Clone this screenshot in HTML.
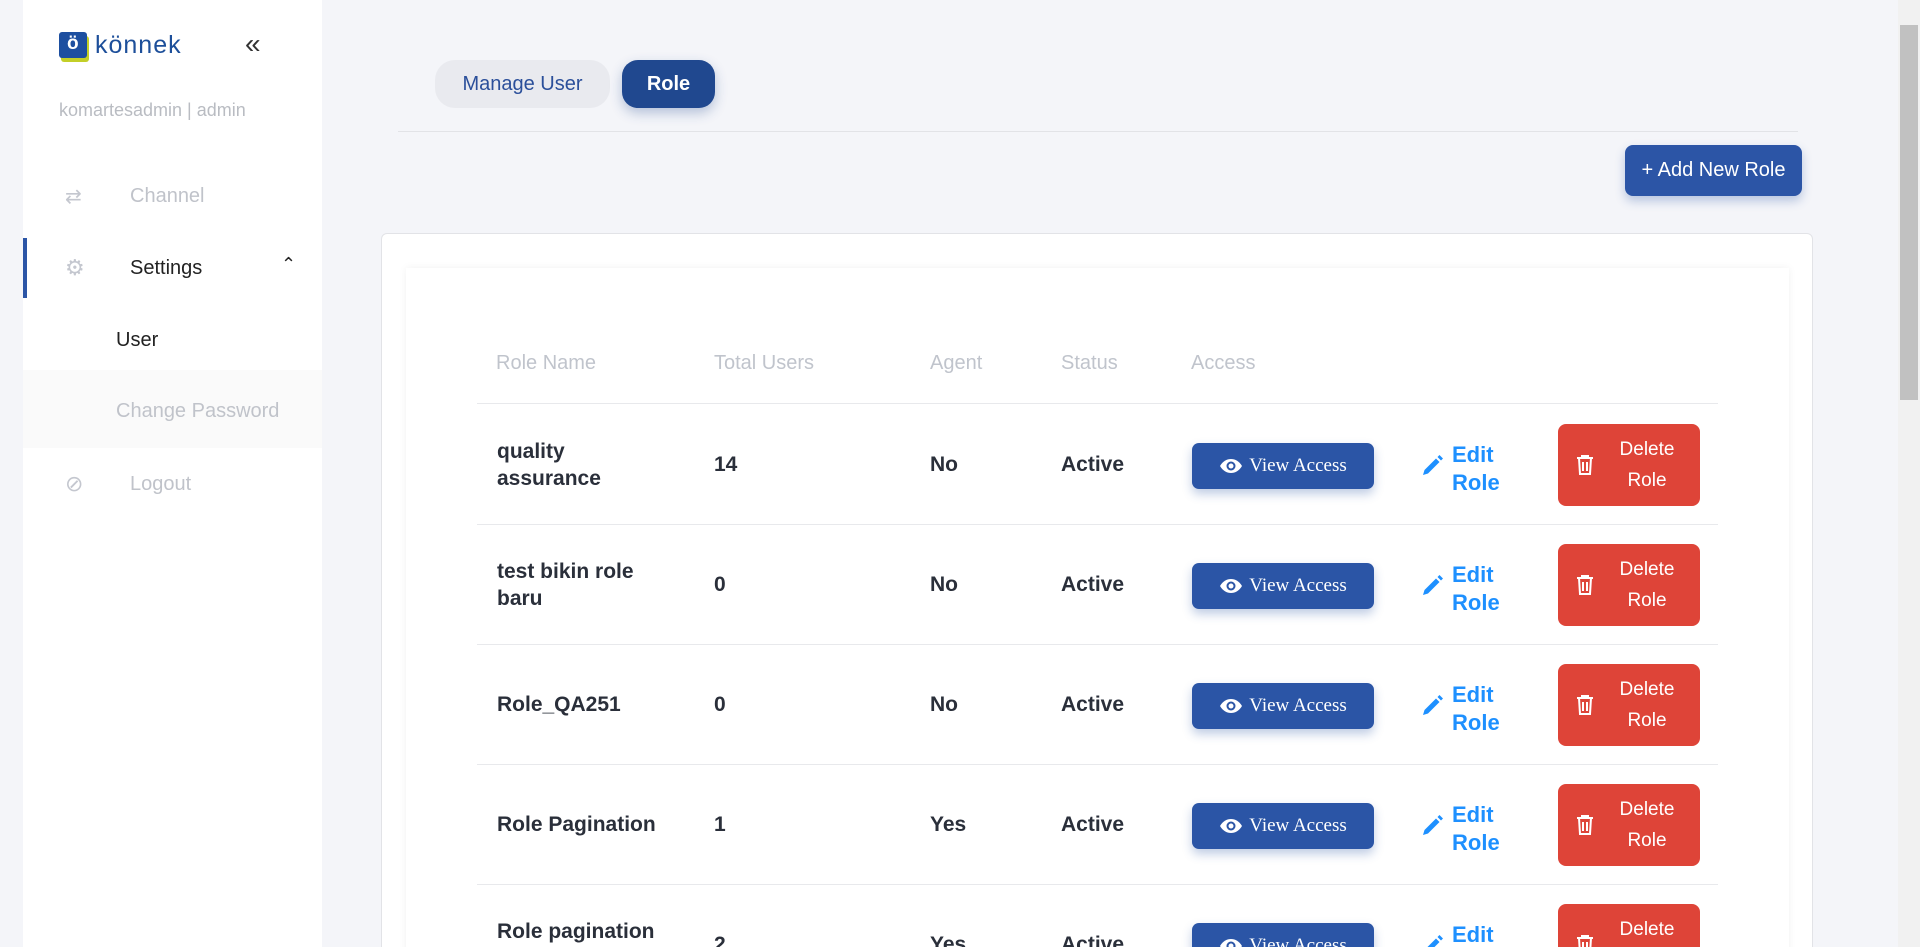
<!DOCTYPE html>
<html><head><meta charset="utf-8"><style>
*{box-sizing:border-box;margin:0;padding:0}
html,body{width:1920px;height:947px;overflow:hidden}
body{background:#f4f5f9;font-family:"Liberation Sans","DejaVu Sans",sans-serif;position:relative}
#wrap{position:absolute;left:0;top:0;width:1920px;height:947px;overflow:hidden}
.abs{position:absolute}
.side{left:23px;top:0;width:299px;height:947px;background:#fff}
.nav{position:absolute;left:0;width:299px;height:72px;display:flex;align-items:center;font-size:20px}
.nav .ic{position:absolute;left:42px;color:#c4c7cf}
.nav .tx{position:absolute;left:107px}
.row{position:absolute;left:477px;width:1241px;height:120px;border-bottom:1px solid #e8e9ec}
.name{position:absolute;left:20px;font-size:21px;font-weight:bold;color:#2a2f3a;line-height:27px;width:150px}
.cell{position:absolute;font-size:21px;font-weight:bold;color:#2a2f3a}
.va{position:absolute;left:715px;top:38px;width:182px;height:46px;background:#2b55a6;border-radius:7px;color:#fff;font-family:"Liberation Serif",serif;font-size:19px;display:flex;align-items:center;justify-content:center;gap:6px;box-shadow:0 5px 10px rgba(43,85,166,.3)}
.ed{position:absolute;left:975px;top:36px;color:#1e90ff;font-size:22px;font-weight:bold;line-height:28px}
.del{position:absolute;left:1081px;top:19px;width:142px;height:82px;background:#de4438;border-radius:8px;color:#fff;font-size:19px;line-height:31px;text-align:center;padding-left:36px;padding-top:10px}
.del svg{position:absolute;left:18px;top:30px}
</style></head><body><div id="wrap">
<div class="abs side">
  <div class="abs" style="left:36px;top:32px;width:28px;height:26px;background:#1d4fa0;border-radius:3px;box-shadow:2px 4px 0 #c3cf27"></div>
  <div class="abs" style="left:44px;top:33px;color:#fff;font-size:19px;font-weight:bold">ö</div>
  <div class="abs" style="left:72px;top:31px;color:#1d4f9a;font-size:25px;letter-spacing:1px">könnek</div>
  <div class="abs" style="left:222px;top:28px;font-size:28px;color:#333">«</div>
  <div class="abs" style="left:36px;top:100px;color:#b9bcc2;font-size:18px">komartesadmin | admin</div>
  <div class="nav" style="top:160px;color:#c0c3ca"><span class="ic">⇄</span><span class="tx">Channel</span></div>
  <div class="nav" style="top:232px;color:#222"><div class="abs" style="left:0;top:6px;width:4px;height:60px;background:#2b55a6"></div><span class="ic" style="font-size:22px">⚙</span><span class="tx">Settings</span><span class="abs" style="left:258px;top:22px;font-size:18px">⌃</span></div>
  <div class="nav" style="top:304px;color:#222;left:0"><span class="tx" style="left:93px">User</span></div>
  <div class="abs" style="left:0;top:370px;width:299px;height:78px;background:#fafafa"></div>
  <div class="nav" style="top:375px;color:#c0c3ca"><span class="tx" style="left:93px">Change Password</span></div>
  <div class="nav" style="top:448px;color:#c0c3ca"><span class="ic" style="font-size:22px">⊘</span><span class="tx">Logout</span></div>
</div>
<div class="abs" style="left:435px;top:60px;width:175px;height:48px;background:#e9eaef;border-radius:20px;color:#2b4f9a;font-size:20px;display:flex;align-items:center;justify-content:center">Manage User</div>
<div class="abs" style="left:622px;top:60px;width:93px;height:48px;background:#20488f;border-radius:16px;color:#fff;font-size:20px;font-weight:bold;display:flex;align-items:center;justify-content:center;box-shadow:0 5px 12px rgba(32,72,143,.3)">Role</div>
<div class="abs" style="left:398px;top:131px;width:1400px;height:1px;background:#e2e3e7"></div>
<div class="abs" style="left:1625px;top:145px;width:177px;height:51px;background:#2c55a6;border-radius:8px;color:#fff;font-size:20px;display:flex;align-items:center;justify-content:center;box-shadow:0 5px 10px rgba(43,85,166,.3)">+ Add New Role</div>
<div class="abs" style="left:381px;top:233px;width:1432px;height:760px;background:#fff;border:1px solid #e2e3e7;border-radius:6px"></div>
<div class="abs" style="left:406px;top:268px;width:1383px;height:720px;background:#fff;box-shadow:0 0 8px rgba(0,0,0,.06)"></div>
<div class="abs" style="left:477px;top:352px;width:1241px;height:52px;border-bottom:1px solid #e8e9ec;color:#c0c4cc;font-size:20px">
 <span class="abs" style="left:19px">Role Name</span><span class="abs" style="left:237px">Total Users</span><span class="abs" style="left:453px">Agent</span><span class="abs" style="left:584px">Status</span><span class="abs" style="left:714px">Access</span>
</div>
<div class="row" style="top:405px"><div class="name" style="top:33px">quality assurance</div><div class="cell" style="left:237px;top:48px">14</div><div class="cell" style="left:453px;top:48px">No</div><div class="cell" style="left:584px;top:48px">Active</div>
<div class="va"><svg width="24" height="16" viewBox="0 0 24 16"><path d="M1 8C4 3 8 1 12 1s8 2 11 7c-3 5-7 7-11 7S4 13 1 8z" fill="#fff"/><circle cx="12" cy="8" r="4.5" fill="#2b55a6"/><circle cx="12" cy="8" r="2.5" fill="#fff"/></svg>View Access</div>
<div class="ed"><svg class="abs" style="left:-32px;top:13px" width="24" height="24" viewBox="0 0 24 24"><path d="M3 21l1.5-5L16 4.5l3.5 3.5L8 19.5z M17.5 3l2-2 3.5 3.5-2 2z" fill="#1e90ff"/></svg>Edit<br>Role</div>
<div class="del"><svg width="18" height="22" viewBox="0 0 18 22"><path d="M1 4h16M6 4V2h6v2M3 4l1 16h10l1-16M7 8v9M11 8v9" stroke="#fff" stroke-width="2" fill="none"/></svg>Delete<br>Role</div></div>
<div class="row" style="top:525px"><div class="name" style="top:33px">test bikin role baru</div><div class="cell" style="left:237px;top:48px">0</div><div class="cell" style="left:453px;top:48px">No</div><div class="cell" style="left:584px;top:48px">Active</div>
<div class="va"><svg width="24" height="16" viewBox="0 0 24 16"><path d="M1 8C4 3 8 1 12 1s8 2 11 7c-3 5-7 7-11 7S4 13 1 8z" fill="#fff"/><circle cx="12" cy="8" r="4.5" fill="#2b55a6"/><circle cx="12" cy="8" r="2.5" fill="#fff"/></svg>View Access</div>
<div class="ed"><svg class="abs" style="left:-32px;top:13px" width="24" height="24" viewBox="0 0 24 24"><path d="M3 21l1.5-5L16 4.5l3.5 3.5L8 19.5z M17.5 3l2-2 3.5 3.5-2 2z" fill="#1e90ff"/></svg>Edit<br>Role</div>
<div class="del"><svg width="18" height="22" viewBox="0 0 18 22"><path d="M1 4h16M6 4V2h6v2M3 4l1 16h10l1-16M7 8v9M11 8v9" stroke="#fff" stroke-width="2" fill="none"/></svg>Delete<br>Role</div></div>
<div class="row" style="top:645px"><div class="name" style="top:46px;width:200px">Role_QA251</div><div class="cell" style="left:237px;top:48px">0</div><div class="cell" style="left:453px;top:48px">No</div><div class="cell" style="left:584px;top:48px">Active</div>
<div class="va"><svg width="24" height="16" viewBox="0 0 24 16"><path d="M1 8C4 3 8 1 12 1s8 2 11 7c-3 5-7 7-11 7S4 13 1 8z" fill="#fff"/><circle cx="12" cy="8" r="4.5" fill="#2b55a6"/><circle cx="12" cy="8" r="2.5" fill="#fff"/></svg>View Access</div>
<div class="ed"><svg class="abs" style="left:-32px;top:13px" width="24" height="24" viewBox="0 0 24 24"><path d="M3 21l1.5-5L16 4.5l3.5 3.5L8 19.5z M17.5 3l2-2 3.5 3.5-2 2z" fill="#1e90ff"/></svg>Edit<br>Role</div>
<div class="del"><svg width="18" height="22" viewBox="0 0 18 22"><path d="M1 4h16M6 4V2h6v2M3 4l1 16h10l1-16M7 8v9M11 8v9" stroke="#fff" stroke-width="2" fill="none"/></svg>Delete<br>Role</div></div>
<div class="row" style="top:765px"><div class="name" style="top:46px;width:200px">Role Pagination</div><div class="cell" style="left:237px;top:48px">1</div><div class="cell" style="left:453px;top:48px">Yes</div><div class="cell" style="left:584px;top:48px">Active</div>
<div class="va"><svg width="24" height="16" viewBox="0 0 24 16"><path d="M1 8C4 3 8 1 12 1s8 2 11 7c-3 5-7 7-11 7S4 13 1 8z" fill="#fff"/><circle cx="12" cy="8" r="4.5" fill="#2b55a6"/><circle cx="12" cy="8" r="2.5" fill="#fff"/></svg>View Access</div>
<div class="ed"><svg class="abs" style="left:-32px;top:13px" width="24" height="24" viewBox="0 0 24 24"><path d="M3 21l1.5-5L16 4.5l3.5 3.5L8 19.5z M17.5 3l2-2 3.5 3.5-2 2z" fill="#1e90ff"/></svg>Edit<br>Role</div>
<div class="del"><svg width="18" height="22" viewBox="0 0 18 22"><path d="M1 4h16M6 4V2h6v2M3 4l1 16h10l1-16M7 8v9M11 8v9" stroke="#fff" stroke-width="2" fill="none"/></svg>Delete<br>Role</div></div>
<div class="row" style="top:885px"><div class="name" style="top:33px;width:200px">Role pagination</div><div class="cell" style="left:237px;top:48px">2</div><div class="cell" style="left:453px;top:48px">Yes</div><div class="cell" style="left:584px;top:48px">Active</div>
<div class="va"><svg width="24" height="16" viewBox="0 0 24 16"><path d="M1 8C4 3 8 1 12 1s8 2 11 7c-3 5-7 7-11 7S4 13 1 8z" fill="#fff"/><circle cx="12" cy="8" r="4.5" fill="#2b55a6"/><circle cx="12" cy="8" r="2.5" fill="#fff"/></svg>View Access</div>
<div class="ed"><svg class="abs" style="left:-32px;top:13px" width="24" height="24" viewBox="0 0 24 24"><path d="M3 21l1.5-5L16 4.5l3.5 3.5L8 19.5z M17.5 3l2-2 3.5 3.5-2 2z" fill="#1e90ff"/></svg>Edit<br>Role</div>
<div class="del"><svg width="18" height="22" viewBox="0 0 18 22"><path d="M1 4h16M6 4V2h6v2M3 4l1 16h10l1-16M7 8v9M11 8v9" stroke="#fff" stroke-width="2" fill="none"/></svg>Delete<br>Role</div></div>
<div class="abs" style="left:1898px;top:0;width:22px;height:947px;background:#f1f1f1"></div>
<div class="abs" style="left:1900px;top:25px;width:18px;height:375px;background:#c1c1c1"></div>
</div></body></html>
